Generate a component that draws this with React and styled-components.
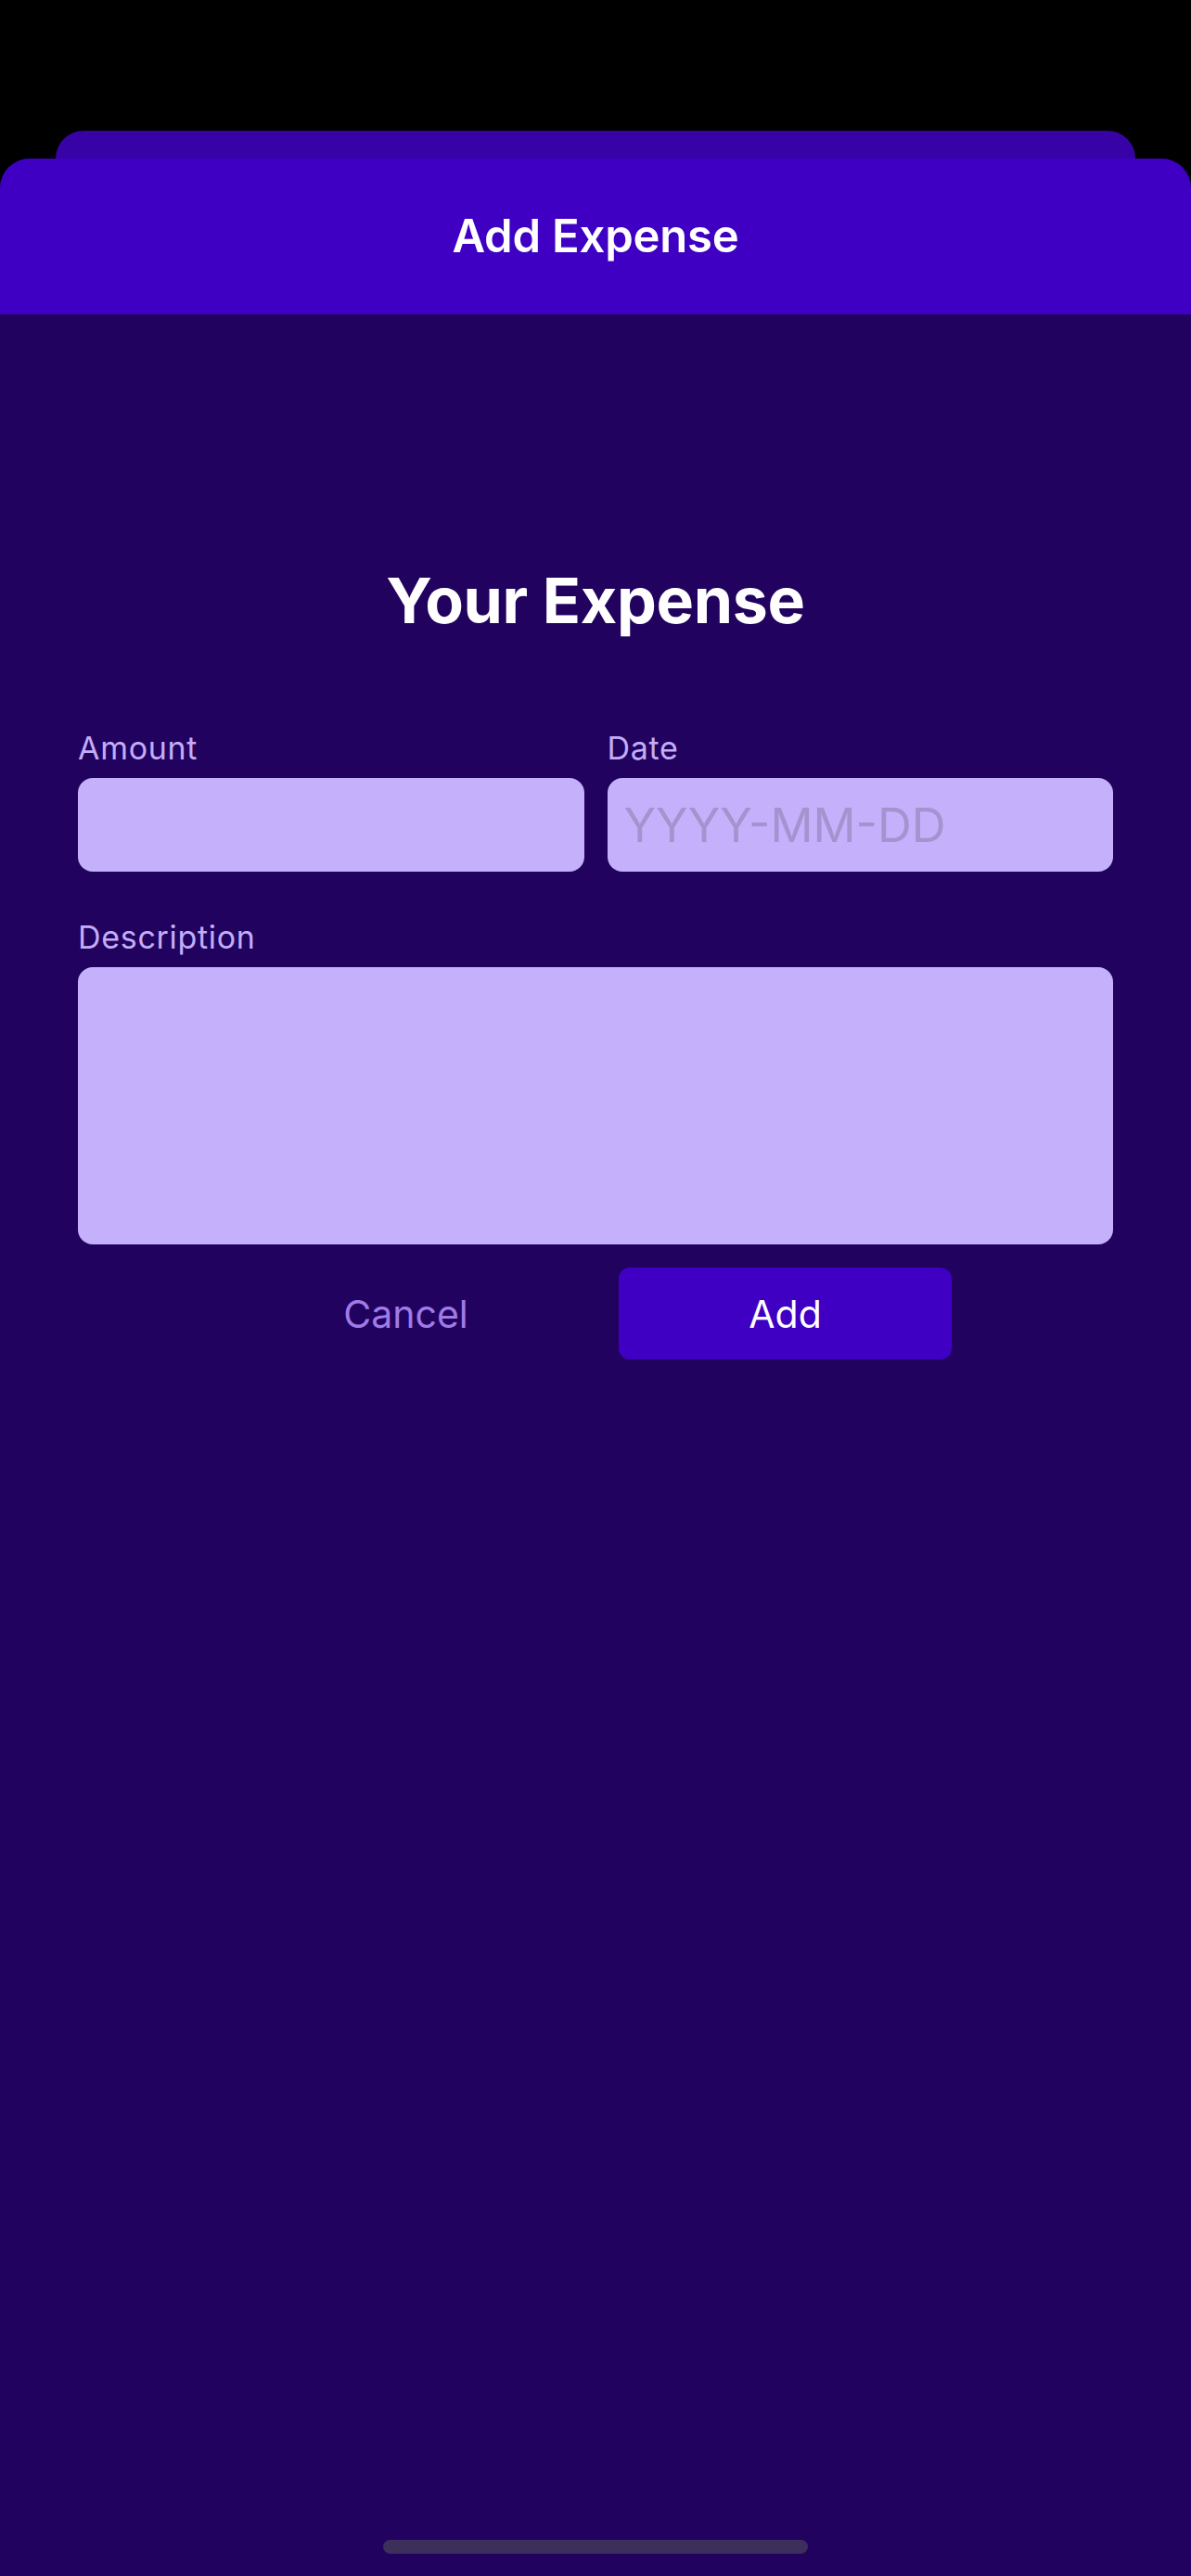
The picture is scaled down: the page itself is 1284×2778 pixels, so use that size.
import React from "react";
import styled, { createGlobalStyle } from "styled-components";

const Global = createGlobalStyle`
  html, body { margin: 0; padding: 0; background: #000; }
  body { font-family: Inter, "Noto Sans", "Liberation Sans", sans-serif; -webkit-font-smoothing: antialiased; }
  * { box-sizing: border-box; }
`;

const Screen = styled.div`
  position: relative;
  min-height: 100vh;
  display: flex;
  flex-direction: column;
  padding-top: 141px;
  background: #000;
`;

const BackCard = styled.div`
  height: 30px;
  margin: 0 60px;
  background: #3803a6;
  border-radius: 30px 30px 0 0;
`;

const Sheet = styled.div`
  flex: 1;
  display: flex;
  flex-direction: column;
  background: #21025f;
  border-radius: 32px 32px 0 0;
  overflow: hidden;
`;

const Header = styled.header`
  height: 168px;
  display: flex;
  align-items: center;
  justify-content: center;
  background: #3f00c4;
`;

const HeaderTitle = styled.h1`
  margin: 0;
  color: #fff;
  font-size: 49px;
  line-height: 60px;
  font-weight: 600;
  letter-spacing: -0.2px;
`;

const Content = styled.main`
  display: flex;
  flex-direction: column;
  padding: 266px 84px 0;
`;

const Title = styled.h2`
  margin: 0 0 97px;
  text-align: center;
  color: #fff;
  font-size: 68px;
  line-height: 84px;
  font-weight: 700;
  letter-spacing: -0.3px;
`;

const Row = styled.div`
  display: grid;
  grid-template-columns: 1fr 1fr;
  column-gap: 25px;
  margin-bottom: 50px;
`;

const Field = styled.label`
  display: flex;
  flex-direction: column;
  gap: 12px;
`;

const Label = styled.span`
  color: #c3adf7;
  font-size: 34px;
  line-height: 41px;
  font-weight: 400;
  letter-spacing: 0.7px;
`;

const Input = styled.input`
  height: 101px;
  width: 100%;
  border: none;
  outline: none;
  border-radius: 16px;
  background: #c5b0fc;
  padding: 0 18px;
  font-family: inherit;
  font-size: 51px;
  color: #21025f;
  &::placeholder { color: #a393cf; }
`;

const TextArea = styled.textarea`
  height: 299px;
  width: 100%;
  border: none;
  outline: none;
  resize: none;
  border-radius: 16px;
  background: #c5b0fc;
  padding: 18px;
  font-family: inherit;
  font-size: 44px;
  color: #21025f;
`;

const Actions = styled.div`
  display: flex;
  justify-content: center;
  gap: 50px;
  margin-top: 25px;
`;

const Button = styled.button`
  width: 359px;
  height: 99px;
  border: none;
  border-radius: 12px;
  background: ${(p) => (p.$primary ? "#3f00c4" : "transparent")};
  color: ${(p) => (p.$primary ? "#fff" : "#9f7be8")};
  font-family: inherit;
  font-size: 41px;
  line-height: 50px;
  font-weight: 400;
  display: flex;
  align-items: center;
  justify-content: center;
  cursor: pointer;
`;

const HomeIndicator = styled.div`
  position: absolute;
  left: 50%;
  bottom: 24px;
  width: 458px;
  height: 15px;
  margin-left: -229px;
  border-radius: 8px;
  background: #3d2f5b;
`;

export default function App() {
  return (
    <>
      <Global />
      <Screen>
        <BackCard />
        <Sheet>
          <Header>
            <HeaderTitle>Add Expense</HeaderTitle>
          </Header>
          <Content>
            <Title>Your Expense</Title>
            <Row>
              <Field>
                <Label>Amount</Label>
                <Input type="text" />
              </Field>
              <Field>
                <Label>Date</Label>
                <Input type="text" placeholder="YYYY-MM-DD" />
              </Field>
            </Row>
            <Field>
              <Label>Description</Label>
              <TextArea />
            </Field>
            <Actions>
              <Button>Cancel</Button>
              <Button $primary>Add</Button>
            </Actions>
          </Content>
        </Sheet>
        <HomeIndicator />
      </Screen>
    </>
  );
}
